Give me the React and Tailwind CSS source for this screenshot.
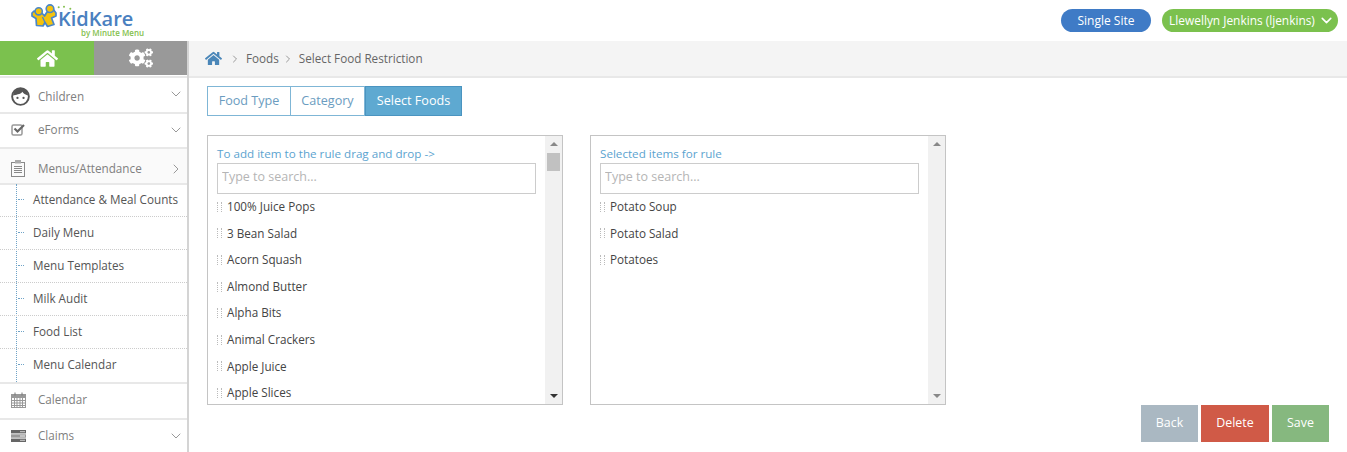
import React from 'react';
import { FaHome, FaCogs } from 'react-icons/fa';
import { ChevronDown, ChevronRight } from 'lucide-react';

const leftFoods = ['100% Juice Pops', '3 Bean Salad', 'Acorn Squash', 'Almond Butter', 'Alpha Bits', 'Animal Crackers', 'Apple Juice', 'Apple Slices'];
const rightFoods = ['Potato Soup', 'Potato Salad', 'Potatoes'];
const subItems = ['Attendance & Meal Counts', 'Daily Menu', 'Menu Templates', 'Milk Audit', 'Food List', 'Menu Calendar'];

// two kids holding hands, with the green dots over them
const LogoMark = () => (
    <svg className="absolute left-0 top-[3px]" width="42" height="25" viewBox="0 0 42 25">
        <path d="M1 10 L1 13 L5 15.5 L5.5 22.5 L12 23 L14 19.5 L16.5 23.5 L23 21.5 L20.5 15 L25 13 L25 10 L22 6 L16 9 L13.5 13 L10 9 L5 9 L3 8 Z" fill="#f4c20d" stroke="#4a86c8" strokeWidth="1.7" strokeLinejoin="round" />
        <path d="M11.5 14 L14 19.5" stroke="#4a86c8" strokeWidth="1.3" fill="none" />
        <circle cx="7.7" cy="8.3" r="3.6" fill="#f4c20d" stroke="#4a86c8" strokeWidth="1.6" />
        <circle cx="19" cy="5.7" r="3.8" fill="#f4c20d" stroke="#4a86c8" strokeWidth="1.6" />
        <circle cx="27.7" cy="4.3" r="1" fill="#84bf4e" />
        <circle cx="33" cy="3.7" r="1" fill="#84bf4e" />
        <circle cx="39.3" cy="5.7" r="1" fill="#84bf4e" />
    </svg>
);

const Logo = () => (
    <div className="relative w-[115px] h-[41px]">
        <LogoMark />
        <span className="absolute left-[27px] top-[10px] text-[20px] leading-[18px] font-semibold text-[#4a80c0]">KidKare</span>
        <span className="absolute left-[50px] top-[29px] text-[8px] leading-[7px] font-semibold text-[#84bf4e] whitespace-nowrap">by Minute Menu</span>
    </div>
);

const FaceIcon = () => (
    <svg width="19" height="19" viewBox="0 0 20 20">
        <circle cx="10" cy="10" r="8.8" fill="#fff" stroke="#555" strokeWidth="2" />
        <path d="M2 9 C3 3 8 1 10 1 C14 1 18 4 18 9 C15 8 13 7 12 5 C10 8 5 8 2 9 Z" fill="#555" />
        <circle cx="6.8" cy="11.5" r="1.2" fill="#555" />
        <circle cx="13.2" cy="11.5" r="1.2" fill="#555" />
    </svg>
);

const CheckIcon = () => (
    <svg width="15" height="13" viewBox="0 0 15 13" fill="none">
        <rect x="1" y="2" width="10" height="10" rx="1.5" stroke="#999" strokeWidth="1.5" />
        <path d="M3.5 5.5 L6.5 8.5 L13 2" stroke="#666" strokeWidth="2.2" />
    </svg>
);

const ClipboardIcon = () => (
    <svg width="14" height="17" viewBox="0 0 14 17" fill="none" stroke="#888" strokeWidth="1">
        <rect x="0.5" y="2.5" width="13" height="14" fill="#fafafa" />
        <rect x="4" y="0" width="6" height="3.5" fill="#aaa" stroke="none" />
        <path d="M3 6.5h8M3 8.5h8M3 10.5h8M3 12.5h8" />
    </svg>
);

const CalendarIcon = () => (
    <svg width="15" height="16" viewBox="0 0 15 16" fill="none" stroke="#999" strokeWidth="1">
        <rect x="0.5" y="2.5" width="14" height="13" />
        <rect x="0.5" y="2.5" width="14" height="3" fill="#999" />
        <path d="M0.5 8.5h14M0.5 11h14M0.5 13.5h14M3.5 5v10M6 5v10M9 5v10M11.5 5v10" />
        <path d="M4 0.5v3M11 0.5v3" stroke="#777" />
    </svg>
);

const ClaimsIcon = () => (
    <svg width="15" height="12" viewBox="0 0 15 12">
        <rect x="0" y="0" width="15" height="3.4" fill="#666" />
        <rect x="0" y="4.3" width="15" height="3.4" fill="#999" />
        <rect x="0" y="8.6" width="15" height="3.4" fill="#666" />
        <rect x="9" y="1.2" width="5" height="1" fill="#ccc" />
        <rect x="9" y="5.5" width="5" height="1" fill="#eee" />
        <rect x="9" y="9.8" width="5" height="1" fill="#ccc" />
    </svg>
);

const MenuRow = ({ icon, label, chevron, chevronClass = '', className }) => (
    <div className={`flex items-center pl-[11px] pr-[3px] border-b-2 border-[#e8e8e8] ${className}`}>
        <span className="w-[27px] flex items-center shrink-0">{icon}</span>
        <span className="text-[11.7px] font-medium text-[#808080]">{label}</span>
        {chevron === 'down' && <ChevronDown className={`ml-auto text-[#999] ${chevronClass}`} size={16} strokeWidth={1.5} />}
        {chevron === 'right' && <ChevronRight className={`ml-auto text-[#999] ${chevronClass}`} size={16} strokeWidth={1.5} />}
    </div>
);

const Sidebar = () => (
    <aside className="w-[189px] shrink-0 border-r-2 border-[#d4d4d4] h-[411px] overflow-hidden">
        <div className="flex h-[34px]">
            <div className="w-[94px] bg-[#7bc14e] flex items-center justify-center text-white"><FaHome size={21} /></div>
            <div className="w-[93px] bg-[#999] flex items-center justify-center text-white"><FaCogs size={24} /></div>
        </div>
        <div className="h-[3px] border-b-2 border-[#e8e8e8]"></div>
        <MenuRow icon={<FaceIcon />} label="Children" chevron="down" chevronClass="-mt-[6px]" className="h-[36px] pt-[3px]" />
        <MenuRow icon={<CheckIcon />} label="eForms" chevron="down" className="h-[35px] pb-[2px]" />
        <MenuRow icon={<ClipboardIcon />} label="Menus/Attendance" chevron="right" className="h-[36px] pt-[5px] bg-[#fafafa]" />
        <ul className="relative border-b-2 border-[#e8e8e8] -mt-[1px]">
            <span className="absolute left-[16px] top-0 bottom-0 border-l border-dotted border-[#6fa3c7]"></span>
            {subItems.map((item, i) => (
                <li key={item} className={`relative h-[33px] pl-[33px] flex items-center text-[11.7px] text-[#555] ${i < subItems.length - 1 ? 'border-b border-dotted border-[#ccc]' : 'pb-[1px]'}`}>
                    <span className="absolute left-[18px] top-[15px] w-[6px] border-t border-dotted border-[#6fa3c7]"></span>
                    {item}
                </li>
            ))}
        </ul>
        <MenuRow icon={<CalendarIcon />} label="Calendar" className="h-[36px] pb-[2px]" />
        <MenuRow icon={<ClaimsIcon />} label="Claims" chevron="down" className="h-[36px] pb-[2px]" />
    </aside>
);

const FoodList = ({ title, items, scrollThumb }) => (
    <div className="w-[356px] h-[270px] border border-[#c4c4c4] flex overflow-hidden">
        <div className="flex-1 pl-[9px] pr-[9px] pt-[9px] overflow-hidden">
            <div className="text-[11.65px] leading-[17px] pb-[1px] text-[#5ba3cf]">{title}</div>
            <input readOnly placeholder="Type to search..." className="block w-[319px] h-[31px] px-[4px] pb-[4px] border-[1.5px] border-[#ccc] text-[12.5px] placeholder:text-[#b5b5b5] outline-none" />
            <ul className="-mt-[0.5px]">
                {items.map((item) => (
                    <li key={item} className="h-[26.6px] flex items-center text-[11.7px] text-[#444]">
                        <span className="w-[5px] h-[10px] mr-[5px] border-x border-dotted border-[#bbb]"></span>
                        {item}
                    </li>
                ))}
            </ul>
        </div>
        <div className="w-[17px] bg-[#f1f1f1] flex flex-col items-center justify-between py-[6px]">
            <div className="flex flex-col items-center">
                <span className="w-0 h-0 border-x-[4px] border-x-transparent border-b-[4px] border-b-[#888]"></span>
                {scrollThumb && <span className="mt-[7px] w-[13px] h-[18px] bg-[#c1c1c1]"></span>}
            </div>
            <span className={`w-0 h-0 border-x-[4px] border-x-transparent border-t-[4px] ${scrollThumb ? 'border-t-[#333]' : 'border-t-[#888]'}`}></span>
        </div>
    </div>
);

export default function App() {
    return (
        <div className="w-[1347px] h-[452px] overflow-hidden bg-white font-['Open_Sans',sans-serif]">
            <header className="h-[41px] flex items-center pl-[31px] pr-[9px]">
                <Logo />
                <div className="ml-auto flex items-center gap-[11px]">
                    <button className="w-[90px] h-[23px] rounded-full bg-[#3f7bc6] text-white text-[12px]">Single Site</button>
                    <button className="w-[176px] h-[23px] rounded-full bg-[#7bc14e] text-white text-[11.9px] flex items-center justify-center gap-[3px] pl-[4px]">
                        Llewellyn Jenkins (ljenkins)
                        <ChevronDown size={17} strokeWidth={2.2} />
                    </button>
                </div>
            </header>
            <div className="flex">
                <Sidebar />
                <main className="flex-1 min-w-0">
                    <div className="h-[37px] bg-[#f4f4f4] border-b-2 border-[#e8e8e8] flex items-center pl-[16px] text-[11.7px] text-[#666]">
                        <FaHome size={17} className="text-[#4a86b8]" />
                        <ChevronRight size={12} className="ml-[7px] mr-[5px] text-[#999]" />
                        <span>Foods</span>
                        <ChevronRight size={12} className="mx-[3px] text-[#999]" />
                        <span className="ml-[2px]">Select Food Restriction</span>
                    </div>
                    <div className="pl-[18px] pt-[8px]">
                        <div className="flex h-[30px] text-[12.6px] w-fit">
                            <div className="w-[84px] border border-[#7fb6d6] text-[#6b9cc0] flex items-center justify-center">Food Type</div>
                            <div className="w-[74px] border-y border-r border-[#7fb6d6] text-[#6b9cc0] flex items-center justify-center">Category</div>
                            <div className="w-[97px] border border-[#4a94c0] bg-[#5ea9d1] text-white flex items-center justify-center">Select Foods</div>
                        </div>
                        <div className="flex gap-[27px] mt-[19px]">
                            <FoodList title="To add item to the rule drag and drop ->" items={leftFoods} scrollThumb />
                            <FoodList title="Selected items for rule" items={rightFoods} />
                        </div>
                    </div>
                    <div className="flex justify-end gap-[3px] pr-[18px] text-[12.4px] text-white">
                        <button className="w-[57px] h-[37px] bg-[#aab8c2]">Back</button>
                        <button className="w-[68px] h-[37px] bg-[#d05a47]">Delete</button>
                        <button className="w-[57px] h-[37px] bg-[#86b87f]">Save</button>
                    </div>
                </main>
            </div>
        </div>
    );
}
